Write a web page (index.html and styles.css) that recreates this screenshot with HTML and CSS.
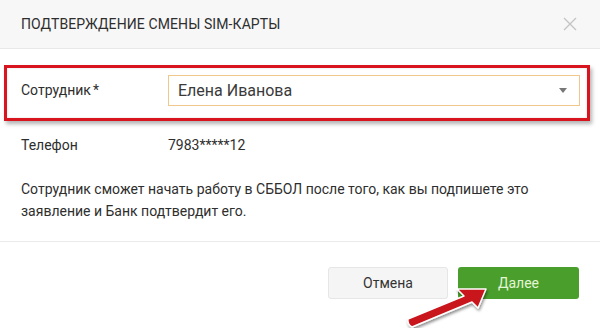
FILE: index.html
```html
<!DOCTYPE html>
<html lang="ru">
<head>
    <meta charset="UTF-8">
    <meta name="viewport" content="width=device-width, initial-scale=1.0">
    <title>Подтверждение смены SIM-карты</title>
    <link rel="stylesheet" href="styles.css">
</head>
<body>

    <div class="modal">
        <!-- Header -->
        <div class="modal-header">
            <h1 class="modal-title">Подтверждение смены SIM-карты</h1>
            <span class="close-btn">
                <svg width="14" height="14" viewBox="0 0 14 14">
                    <path d="M1 1 L13 13 M13 1 L1 13" stroke="#c4c4c4" stroke-width="1.4" fill="none"/>
                </svg>
            </span>
        </div>

        <!-- Body -->
        <div class="modal-body">
            <div class="field-row highlight">
                <div class="field-label">Сотрудник<span class="req">*</span></div>
                <div class="select">
                    <span class="select-value">Елена Иванова</span>
                    <span class="select-arrow"></span>
                </div>
            </div>

            <div class="field-row plain">
                <div class="field-label">Телефон</div>
                <div class="field-value">7983*****12</div>
            </div>

            <p class="note">Сотрудник сможет начать работу в СББОЛ после того, как вы подпишете это заявление и Банк подтвердит его.</p>
        </div>

        <!-- Footer -->
        <div class="modal-footer">
            <button class="btn btn-cancel">Отмена</button>
            <button class="btn btn-next">Далее</button>
        </div>

        <svg class="pointer" width="100" height="56" viewBox="0 0 100 56">
            <defs>
                <filter id="shadow" x="-20%" y="-20%" width="140%" height="140%">
                    <feDropShadow dx="1" dy="2" stdDeviation="1.5" flood-color="#000" flood-opacity="0.45"/>
                </filter>
            </defs>
            <path d="M8 46 L64 23 L57 16 L86 16 L78 35 L72 29 L12 54 Q7 51 8 46 Z"
                  fill="#c8141c" stroke="#fff" stroke-width="1.5" stroke-linejoin="round" filter="url(#shadow)"/>
        </svg>
    </div>

</body>
</html>
```

FILE: styles.css
```css
* {
    box-sizing: border-box;
}

body {
    margin: 0;
    padding: 0;
    font-family: Roboto, 'Noto Sans', Arial, sans-serif;
    background-color: #fff;
    color: #333;
}

.modal {
    position: relative;
    width: 600px;
    height: 328px;
    background-color: #fff;
    overflow: hidden;
}

.modal-header {
    height: 49px;
    padding: 0 22px 0 21px;
    background-color: #f7f7f7;
    border-bottom: 1px solid #e8e8e8;
    display: flex;
    align-items: center;
    justify-content: space-between;
}

.modal-title {
    margin: 0;
    font-size: 14px;
    font-weight: normal;
    text-transform: uppercase;
    color: #2e2e2e;
    letter-spacing: 0.1px;
}

.close-btn {
    display: flex;
    padding-right: 1px;
}

.modal-body {
    padding: 16px 10px 0 4px;
}

.field-row {
    display: flex;
    align-items: center;
}

.field-label {
    width: 147px;
    font-size: 14px;
    color: #2e2e2e;
}

.req {
    margin-left: 2px;
}

.highlight {
    height: 56px;
    padding: 7px 7px 0 14px;
    align-items: flex-start;
    border: 3px solid #d8141e;
    box-shadow: 2px 3px 4px rgba(0, 0, 0, 0.3), inset 0 0 2px rgba(0, 0, 0, 0.15);
}

.highlight .field-label {
    line-height: 31px;
}

.select {
    flex: 1;
    height: 31px;
    border: 1px solid #f0c78c;
    display: flex;
    align-items: center;
    justify-content: space-between;
    padding: 0 12px 0 9px;
}

.select-value {
    font-size: 16px;
    color: #3a3a3a;
}

.select-arrow {
    width: 0;
    height: 0;
    border-left: 4px solid transparent;
    border-right: 4px solid transparent;
    border-top: 5px solid #777;
}

.plain {
    padding: 13px 0 0 17px;
    height: 34px;
}

.field-value {
    font-size: 14px;
    color: #2e2e2e;
}

.note {
    margin: 23px 0 0 17px;
    font-size: 14px;
    line-height: 22px;
    color: #2e2e2e;
}

.modal-footer {
    position: absolute;
    left: 0;
    right: 0;
    top: 241px;
    border-top: 1px solid #ebebeb;
    padding: 25px 21px 0 0;
    display: flex;
    justify-content: flex-end;
    gap: 10px;
}

.btn {
    height: 32px;
    border: none;
    border-radius: 3px;
    font-family: Roboto, 'Noto Sans', Arial, sans-serif;
    font-size: 14px;
    cursor: pointer;
}

.btn-cancel {
    width: 120px;
    background-color: #f5f5f5;
    border: 1px solid #e6e6e6;
    color: #333;
}

.btn-next {
    width: 121px;
    background-color: #4a9e2c;
    color: #e4f5d6;
}

.pointer {
    position: absolute;
    left: 400px;
    top: 273px;
}
```
